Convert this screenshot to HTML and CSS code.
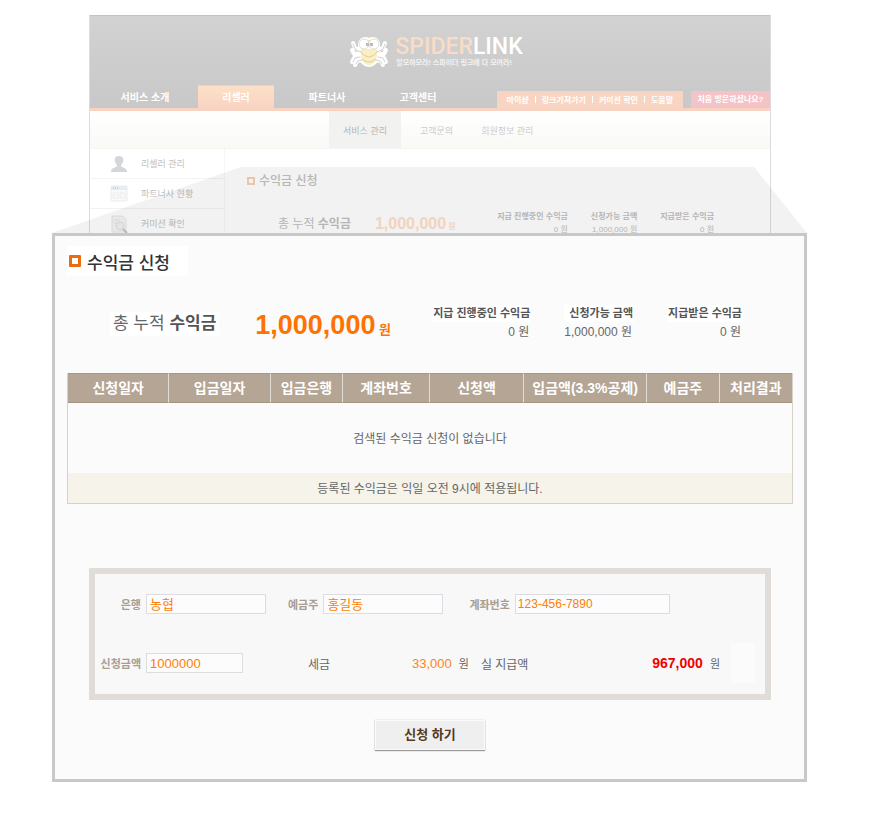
FILE: index.html
```html
<!DOCTYPE html>
<html lang="ko">
<head>
    <meta charset="UTF-8">
    <meta name="viewport" content="width=device-width, initial-scale=1.0">
    <title>수익금 신청</title>
    <link rel="stylesheet" href="styles.css">
</head>
<body>
    <div class="stage">
        <div class="site">
            <header class="header">
                <div class="logo">
                    <svg class="spider" width="40" height="32" viewBox="0 0 40 32">
                        <g fill="none" stroke="#fff" stroke-width="4" stroke-linecap="round" stroke-linejoin="round">
                            <path d="M12 15L6 12L4 7M11 18L5 18L3 14M11 21L5 22L3 26M14 24L8 25L6 29"/>
                            <path d="M28 15L34 12L36 7M29 18L35 18L37 14M29 21L35 22L37 26M26 24L32 25L34 29"/>
                        </g>
                        <path d="M20 2C15 -1 8 3 9 10C7 20 11 31 20 31C29 31 33 20 31 10C32 3 25 -1 20 2Z" fill="#fff"/>
                        <g fill="none" stroke="#d2d2d2" stroke-linecap="round" stroke-linejoin="round">
                            <path d="M11 16L6 13L4 8M11 21L6 22L4 26M13 24L9 25L7 28"/>
                            <path d="M29 16L34 13L36 8M29 21L34 22L36 26M27 24L31 25L33 28"/>
                        </g>
                        <path d="M12 13C11 22 14 29 20 29C26 29 29 22 28 13Z" fill="#fdeebf"/>
                        <circle cx="15" cy="8" r="5" fill="#fff" stroke="#ddd"/>
                        <circle cx="25" cy="8" r="5" fill="#fff" stroke="#ddd"/>
                        <path d="M17 7h3v3h-3zM21 7h3v3h-3z" fill="#bcbcbc"/>
                        <path d="M18 4h4l-2 2z" fill="#f8dcae"/>
                        <path d="M11 15Q20 27 29 15M13 23Q20 29 27 23" fill="none" stroke="#d5cfb9"/>
                    </svg>
                    <div class="logo-text">
                        <strong class="brand"><span>SPIDER</span>LINK</strong>
                        <p class="slogan">알모하모라! 스파이더 링크에 다 모여라!</p>
                    </div>
                </div>
                <nav class="nav">
                    <a href="#">서비스 소개</a>
                    <a href="#" class="active">리셀러</a>
                    <a href="#">파트너사</a>
                    <a href="#">고객센터</a>
                    <div class="quick">
                        <a href="#">마이샵</a><i></i><a href="#">링크가져가기</a><i></i><a href="#">커미션 확인</a><i></i><a href="#">도움말</a>
                    </div>
                    <a href="#" class="first-visit">처음 방문하셨나요?</a>
                </nav>
            </header>
            <nav class="subnav">
                <a href="#" class="active">서비스 관리</a>
                <a href="#">고객문의</a>
                <a href="#">회원정보 관리</a>
            </nav>
            <div class="site-body">
                <aside class="side">
                    <a href="#">
                        <svg width="18" height="18" viewBox="0 0 18 18"><path d="M9 1C5 1 4 4 5 7C6 9 7 10 7 11C6 13 1 12 1 17H17C17 12 12 13 11 11C11 10 12 9 13 7C14 4 13 1 9 1Z" fill="#d3d7db"/></svg>
                        리셀러 관리
                    </a>
                    <a href="#">
                        <svg width="18" height="18" viewBox="0 0 18 18"><rect x="1" y="1" width="16" height="15" rx="1" fill="#f9f9f9" stroke="#ececec"/><path d="M1 1h16v4H1z" fill="#e4edf3"/><path d="M3 3h1M5 3h1M7 3h1" stroke="#bbb"/><path d="M3 8h8M3 10h6v3H3zM11 8h4v5h-4z" fill="none" stroke="#ededed"/></svg>
                        파트너사 현황
                    </a>
                    <a href="#">
                        <svg width="18" height="18" viewBox="0 0 18 18"><path d="M2 1h11l3 3v13H2z" fill="#f5f5f5" stroke="#e6e6e6"/><path d="M4 5h6M4 8h3" stroke="#e4e4e4"/><circle cx="10" cy="11" r="4" fill="#f1f1f1" stroke="#dfdfdf"/><path d="M13 14l4 4" stroke="#c4c4c4" stroke-width="2"/></svg>
                        커미션 확인
                    </a>
                </aside>
                <div class="mini">
                    <h2 class="mini-title">수익금 신청</h2>
                    <div class="mini-stats">
                        <p class="mini-label">총 누적 <b>수익금</b></p>
                        <p class="mini-amount"><b>1,000,000</b> 원</p>
                        <dl><dt>지급 진행중인 수익금</dt><dd>0 원</dd></dl>
                        <dl><dt>신청가능 금액</dt><dd>1,000,000 원</dd></dl>
                        <dl><dt>지급받은 수익금</dt><dd>0 원</dd></dl>
                    </div>
                </div>
            </div>
        </div>
        <div class="beam"></div>

        <main class="panel">
            <h1 class="title">수익금 신청</h1>
            <div class="stats">
                <p class="total-label">총 누적 <b>수익금</b></p>
                <p class="total"><b>1,000,000</b> 원</p>
                <dl><dt>지급 진행중인 수익금</dt><dd>0 원</dd></dl>
                <dl><dt>신청가능 금액</dt><dd>1,000,000 원</dd></dl>
                <dl><dt>지급받은 수익금</dt><dd>0 원</dd></dl>
            </div>

            <table class="list">
                <colgroup>
                    <col class="w14"><col class="w14"><col class="w10"><col class="w12">
                    <col class="w13"><col class="w17"><col class="w10"><col class="w10">
                </colgroup>
                <thead>
                    <tr>
                        <th>신청일자</th>
                        <th>입금일자</th>
                        <th>입금은행</th>
                        <th>계좌번호</th>
                        <th>신청액</th>
                        <th>입금액(3.3%공제)</th>
                        <th>예금주</th>
                        <th>처리결과</th>
                    </tr>
                </thead>
                <tbody>
                    <tr><td colspan="8">검색된 수익금 신청이 없습니다</td></tr>
                </tbody>
                <tfoot>
                    <tr><td colspan="8">등록된 수익금은 익일 오전 9시에 적용됩니다.</td></tr>
                </tfoot>
            </table>

            <form class="request" id="request-form">
                <div class="fields">
                    <div class="row">
                        <label class="first" for="bank">은행</label>
                        <input type="text" id="bank" name="bank" class="bank" value="농협">
                        <label for="owner">예금주</label>
                        <input type="text" id="owner" name="owner" class="owner" value="홍길동">
                        <label for="account">계좌번호</label>
                        <input type="text" id="account" name="account" class="account" value="123-456-7890">
                    </div>
                    <div class="row">
                        <label class="first" for="amount">신청금액</label>
                        <input type="text" id="amount" name="amount" class="amount" value="1000000">
                        <span class="tax-label">세금</span>
                        <span class="tax">33,000</span>
                        <span class="won">원</span>
                        <span class="pay-label">실 지급액</span>
                        <strong class="pay">967,000</strong>
                        <span class="won">원</span>
                        <span class="blank"></span>
                    </div>
                </div>
                <button type="submit">신청 하기</button>
            </form>
        </main>
    </div>
</body>
</html>
```

FILE: styles.css
```css
*,
*::before {
    box-sizing: border-box;
}

body {
    margin: 0;
    background: #fff;
    font-family: "Liberation Sans", "Noto Sans CJK KR", sans-serif;
    font-size: 12px;
    color: #666;
}

h1, h2, p, dl, dd {
    margin: 0;
}

a {
    color: inherit;
    text-decoration: none;
}

.stage {
    position: relative;
    padding: 15px 80px 31px 52px;
}

/* faded site behind the panel */
.site {
    height: 218px;
    margin: 0 36px 0 37px;
    overflow: hidden;
    border: 1px solid #dcdcdc;
    border-width: 0 1px;
}

.header {
    display: flex;
    flex-direction: column;
    justify-content: space-between;
    height: 96px;
    border-top: 1px solid #c2c2c2;
    border-bottom: 3px solid #f8d3c2;
    background: linear-gradient(#d2d2d2, #c8c8c8);
}

.logo {
    display: flex;
    justify-content: center;
    gap: 6px;
    padding: 20px 0 0 12px;
}

.brand {
    display: block;
    font: 500 23px/21px Roboto, sans-serif;
    color: #fff;
}

.brand span {
    color: #fadcc6;
}

.slogan {
    padding-left: 1px;
    font-size: 7px;
    line-height: 11px;
    font-weight: bold;
    color: #f3f3f3;
}

.nav {
    display: flex;
    align-items: flex-end;
    padding-left: 9px;
    font-size: 10px;
    font-weight: bold;
    text-align: center;
    color: #fff;
}

.nav > a {
    width: 76px;
    margin: 0 15px 0 0;
    padding-top: 2px;
    line-height: 20px;
}

.nav > a:first-child {
    margin-left: 8px;
}

.nav > a.active {
    border-top: 1px solid #f7d0bd;
    background: linear-gradient(#fde0c6, #f8d3c4);
}

.nav .quick {
    display: flex;
    align-items: center;
    gap: 6px;
    height: 17px;
    margin-left: auto;
    padding: 0 10px;
    background: #f8d5c3;
    font-size: 8px;
}

.quick i {
    width: 1px;
    height: 7px;
    background: #fff;
}

.nav > .first-visit {
    width: 79px;
    height: 17px;
    margin: 0 0 0 8px;
    padding: 0;
    background: #f3c3c8;
    font-size: 8px;
    line-height: 18px;
}

.subnav {
    display: flex;
    height: 38px;
    padding-left: 239px;
    border-bottom: 1px solid #f5f5f4;
    background: linear-gradient(#fff, #f9f9f6);
    font-size: 9px;
    line-height: 40px;
    color: #ccc;
}

.subnav a {
    margin-left: 19px;
}

.subnav a + a + a {
    margin-left: 28px;
}

.subnav .active {
    width: 72px;
    margin-left: 0;
    background: #f2f2f0;
    text-align: center;
    color: #b5b5b5;
}

.site-body {
    display: flex;
}

.side {
    width: 135px;
    border-right: 1px solid #f6f6f6;
}

.side a {
    display: flex;
    align-items: center;
    gap: 13px;
    height: 30px;
    padding-left: 20px;
    border-bottom: 1px solid #f3f3f3;
    font-size: 9px;
    color: #c0c0c0;
}

.mini {
    flex: 1;
    padding: 23px 56px 0 22px;
    color: #c0c0c0;
}

.mini-title {
    display: flex;
    align-items: center;
    gap: 4px;
    font-size: 12px;
    line-height: 18px;
    font-weight: 500;
}

.mini-title::before {
    content: "";
    width: 8px;
    height: 8px;
    border: 2px solid #f7d0b0;
}

.mini-stats {
    display: flex;
    padding: 20px 0 0 31px;
    white-space: nowrap;
}

.mini-label {
    padding-top: 5px;
    font-size: 12px;
    line-height: 18px;
}

.mini-amount {
    margin: 0 auto 0 24px;
    padding-top: 5px;
    font-size: 8px;
    line-height: 18px;
    font-weight: bold;
    color: #fde0ca;
}

.mini-amount b {
    font-size: 16px;
}

.mini-stats dl {
    margin-left: 23px;
    font-size: 8px;
    line-height: 13px;
    text-align: right;
}

.mini-stats dt {
    font-weight: bold;
}

/* light beam from the page down to the panel */
.beam {
    position: absolute;
    top: 167px;
    left: 52px;
    right: 80px;
    height: 66px;
    background: rgba(0, 0, 0, 0.05);
    clip-path: polygon(25% 0, 93% 0, 100% 100%, 0 100%);
}

.panel {
    padding: 10px 11px 29px 12px;
    border: 3px solid #c8c8c8;
    background: #fbfbfb;
}

.title {
    display: inline-flex;
    align-items: center;
    gap: 6px;
    height: 30px;
    padding: 0 18px 0 2px;
    background: #fff;
    font-size: 17px;
    font-weight: 500;
    color: #333;
}

.title::before {
    content: "";
    width: 12px;
    height: 12px;
    border: 3px solid #e96d0f;
    border-radius: 1px;
}

.stats {
    display: flex;
    height: 97px;
    padding: 29px 50px 0 43px;
    white-space: nowrap;
}

.total-label {
    height: 24px;
    margin-top: 7px;
    padding: 0 3px;
    background: #fff;
    font-size: 17px;
    line-height: 24px;
}

.total-label b {
    color: #555;
}

.total {
    margin: 0 auto 0 36px;
    font-size: 13px;
    line-height: 40px;
    font-weight: bold;
    color: #ff7200;
}

.total b {
    font-size: 27px;
}

.stats dl {
    margin-left: 33px;
    line-height: 20px;
    text-align: right;
}

.stats dt {
    height: 17px;
    padding: 0 1px;
    background: #fff;
    font-size: 11px;
    line-height: 17px;
    font-weight: bold;
    color: #555;
}

.stats dd {
    padding-right: 2px;
}

.list {
    width: 100%;
    border: 1px solid #d6d2c6;
    border-top: 0;
    border-spacing: 0;
    table-layout: fixed;
    text-align: center;
}

.w10 { width: 10%; }
.w12 { width: 12%; }
.w13 { width: 13%; }
.w14 { width: 14%; }
.w17 { width: 17%; }

.list th {
    height: 30px;
    padding: 0;
    border-top: 1px solid #a89888;
    border-bottom: 1px solid #a39383;
    border-right: 1px solid #e0dcd6;
    background: #b4a594;
    font-size: 14px;
    line-height: 20px;
    color: #fff;
    white-space: nowrap;
}

.list th:last-child {
    border-right: 0;
}

.list td {
    height: 70px;
    padding: 0 0 2px;
}

.list tfoot td {
    height: 30px;
    background: #f5f3ea;
}

.request {
    margin: 64px 22px 0;
    text-align: center;
}

.fields {
    display: flex;
    flex-direction: column;
    gap: 19px;
    height: 132px;
    padding: 10px;
    padding-left: 2px;
    border: 6px solid #e0dcd8;
    background: #f8f8f8;
}

.row {
    display: flex;
    align-items: center;
    height: 40px;
    text-align: left;
}

.row label {
    margin: 0 5px 0 20px;
    font-size: 11px;
    font-weight: bold;
    color: #a89d93;
}

.row label.first {
    width: 44px;
    margin-left: 0;
    text-align: right;
}

.row .bank + label {
    margin-left: 22px;
}

.row .owner + label {
    margin-left: 26px;
}

.row input {
    height: 20px;
    padding: 0 3px 2px;
    border: 1px solid #dcdce2;
    background: #fcfcfc;
    font: 13px "Liberation Sans", "Noto Sans CJK KR", sans-serif;
    color: #ff7e00;
}

.row .bank,
.row .owner {
    width: 120px;
}

.row .account {
    width: 155px;
    padding: 0 2px;
    font-size: 12px;
}

.row .amount {
    width: 97px;
    padding-bottom: 0;
}

.tax-label {
    width: 104px;
    margin-left: 65px;
}

.tax {
    font-size: 13px;
    color: #ff8420;
}

.won {
    margin-left: 7px;
    font-size: 11px;
}

.pay-label {
    margin: 0 auto 0 12px;
}

.pay {
    font-size: 14px;
    color: #f00000;
}

.blank {
    width: 24px;
    height: 40px;
    margin-left: 11px;
    background: #fbfbfb;
}

.request button {
    width: 110px;
    height: 30px;
    margin-top: 20px;
    padding: 0 0 4px;
    border: 1px solid #fafafa;
    background: #efefef;
    box-shadow: 0 1px 1px #999, 0 0 1px #bbb;
    font: bold 13px "Noto Sans CJK KR", sans-serif;
    color: #553822;
    cursor: pointer;
}
```
